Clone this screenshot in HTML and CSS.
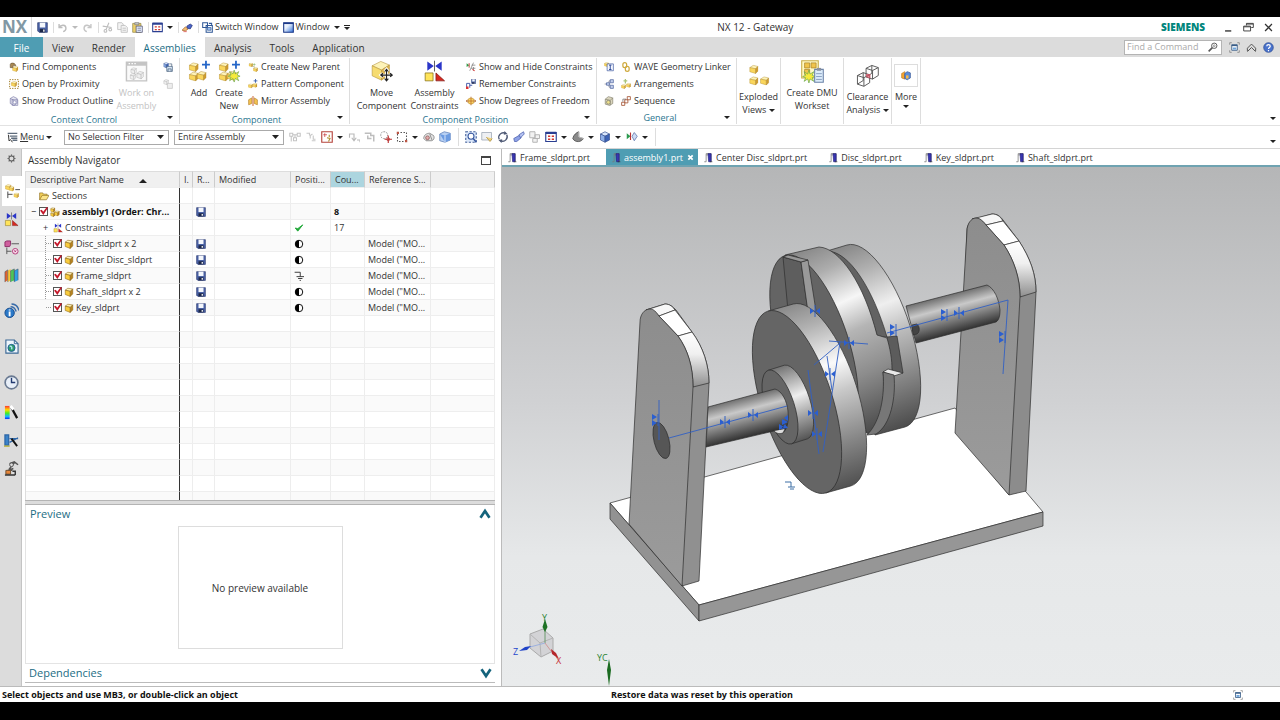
FILE: index.html
```html
<!DOCTYPE html>
<html lang="en">
<head>
<meta charset="utf-8">
<title>NX 12 - Gateway</title>
<link rel="stylesheet" href="styles.css">
</head>
<body>
<svg class="sprite" aria-hidden="true">
  <defs>
    <linearGradient id="blueBox" x1="0" y1="0" x2="1" y2="1"><stop offset="0" stop-color="#fff"/><stop offset=".4" stop-color="#e4eefc"/><stop offset="1" stop-color="#2f6fd8"/></linearGradient>
    <linearGradient id="spectrum" x1="0" y1="0" x2="0" y2="1"><stop offset="0" stop-color="#f33"/><stop offset=".3" stop-color="#fd0"/><stop offset=".55" stop-color="#4e2"/><stop offset=".8" stop-color="#1bf"/><stop offset="1" stop-color="#12f"/></linearGradient>
  </defs>
  <symbol id="cube" viewBox="0 0 16 16"><g stroke="#b08a2c" stroke-width=".7" stroke-linejoin="round"><path d="M1 5l6-4 8 2-4 4z" fill="#fdf2b8"/><path d="M1 5l10 2v8L1 12z" fill="#fad65c"/><path d="M11 7l4-4v8l-4 4z" fill="#cf9c30"/></g></symbol>
  <symbol id="part-cube" viewBox="0 0 16 16"><g stroke="#8a6416" stroke-width=".9" stroke-linejoin="round"><path d="M2 5l4-3 8 1-4 4z" fill="#fdf2b8"/><path d="M2 5l8 2v8l-8-3z" fill="#f9cc3c"/><path d="M10 7l4-4v8l-4 4z" fill="#b9821c"/></g></symbol>
  <symbol id="graycube" viewBox="0 0 16 16"><g stroke="#b4b4b4" fill="#efefef" stroke-linejoin="round"><path d="M2 5l5-4 7 2-4 4z"/><path d="M2 5l8 2v8l-8-3z"/><path d="M10 7l4-4v8l-4 4z"/></g></symbol>
  <symbol id="bluecube" viewBox="0 0 16 16"><g stroke="#35508f" stroke-width=".9" stroke-linejoin="round"><path d="M2 4l6-3 6 3-6 3z" fill="#d8e5fa"/><path d="M2 4l6 3v8l-6-3z" fill="#8fb0e8"/><path d="M8 7l6-3v8l-6 3z" fill="#3c62b5"/></g></symbol>
  <symbol id="save" viewBox="0 0 16 16"><path d="M1 1h14v14H3l-2-2z" fill="#4b63a6" stroke="#26366e"/><path d="M4 1h8v7H4z" fill="#f4f7fc"/><path d="M4 10h8v5H4z" fill="#1c2748"/><path d="M9 11h2v3H9z" fill="#fff"/></symbol>
  <symbol id="undo" viewBox="0 0 16 16"><path d="M3 3v5h5M3 8c3-5 10-4 10 1 0 2-1 4-4 5" fill="none" stroke="#bdbdbd" stroke-width="2"/></symbol>
  <symbol id="redo" viewBox="0 0 16 16"><path d="M13 3v5H8M13 8C10 3 3 4 3 9c0 2 1 4 4 5" fill="none" stroke="#c6c6c6" stroke-width="2"/></symbol>
  <symbol id="cut" viewBox="0 0 16 16"><g fill="none" stroke="#bdbdbd" stroke-width="1.600"><path d="M10 1L6 11M1 6l13 2"/><circle cx="5" cy="13" r="2"/><circle cx="12" cy="11" r="2"/></g></symbol>
  <symbol id="copy" viewBox="0 0 16 16"><g fill="#f4f4f4" stroke="#bdbdbd" stroke-width="1.200"><path d="M1 1h6l2 2v8H1z"/><path d="M6 5h6l3 3v7H6z"/><path d="M8 9h5M8 12h5"/></g></symbol>
  <symbol id="paste" viewBox="0 0 16 16"><path d="M1 2h12v13H1z" fill="#ecd06a" stroke="#8d8146"/><path d="M4 1h6v3H4z" fill="#ccc" stroke="#777"/><path d="M6 6h9v9H6z" fill="#e9f2ff" stroke="#446"/><path d="M8 9h5M8 12h5" stroke="#557"/></symbol>
  <symbol id="layout" viewBox="0 0 16 16"><path d="M1 2h14v12H1z" fill="#fff" stroke="#2a3e91" stroke-width="1.500"/><path d="M1 1h14v3H1z" fill="#2a3e91"/><path d="M4 6h3v2H4zM9 6h3v2H9zM4 10h3v2H4zM9 10h3v2H9z" fill="#d2372f"/></symbol>
  <symbol id="touch" viewBox="0 0 16 16"><path d="M0 12l5-5 4 3-4 3z" fill="#f1bd74" stroke="#a0602a"/><path d="M7 6l5-3 3 2-3 5-4-1z" fill="#4a63c6" stroke="#233278"/><path d="M2 14h5" stroke="#d44"/></symbol>
  <symbol id="switch" viewBox="0 0 16 16"><g fill="#fff" stroke="#2e5797" stroke-width="1.500"><path d="M1 1h7v7H1zM6 5h9v10H6z"/></g><path d="M8 8h5v4H8z" fill="#9dc0ef" stroke="#2e5797"/><path d="M10 2h4v3" fill="none" stroke="#2e5797" stroke-width="1.500"/></symbol>
  <symbol id="win" viewBox="0 0 16 16"><path d="M1 1h14v14H1z" fill="url(#blueBox)" stroke="#1c3988" stroke-width="1.600"/><path d="M1 2h14" stroke="#1c3988" stroke-width="2"/></symbol>
  <symbol id="find" viewBox="0 0 16 16"><use href="#cube" x="5" y="6" width="10" height="10"/><path d="M2 9V4c0-3 7-3 8 0l1 2-4-1-1 4z" fill="#a98954" stroke="#6b583c"/></symbol>
  <symbol id="prox" viewBox="0 0 16 16"><path d="M1 1h14v14H1z" fill="none" stroke="#9b7418" stroke-dasharray="2 2" stroke-width="1.500"/><use href="#cube" x="3" y="3" width="10" height="10"/></symbol>
  <symbol id="outline" viewBox="0 0 16 16"><path d="M2 4l5-3 6 3v8l-5 3-6-3z" fill="#e6e6f0" stroke="#7374a4"/><path d="M5 6h9v9H5zM2 4l6 3" fill="none" stroke="#7374a4"/><circle cx="9" cy="10" r="2.500" fill="#fff" stroke="#7778aa"/></symbol>
  <symbol id="work" viewBox="0 0 32 32"><path d="M2 3h28v26H2z" fill="#fafafa" stroke="#c4c4c4" stroke-width="2"/><path d="M2 3h28v5H2z" fill="#c4c4c4"/><path d="M5 5h2M9 5h2M13 5h2" stroke="#fff" stroke-width="2"/><use href="#graycube" x="7" y="10" width="10" height="10"/><use href="#graycube" x="6" y="18" width="10" height="10"/><use href="#graycube" x="15" y="15" width="12" height="12"/></symbol>
  <symbol id="ctx" viewBox="0 0 16 16"><use href="#bluecube" x="0" y="0" width="10" height="10"/><path d="M6 7h9v8H6z" fill="#d7e5f5" stroke="#33506f"/><path d="M8 15v-4h5v4M10 3h4v4" fill="none" stroke="#33506f"/></symbol>
  <symbol id="ctxg" viewBox="0 0 16 16"><use href="#graycube" x="0" y="0" width="10" height="10"/><path d="M7 7h8v8H7z" fill="#eee" stroke="#bbb"/></symbol>
  <symbol id="add" viewBox="0 0 32 32"><use href="#cube" x="1" y="3" width="14" height="14"/><use href="#cube" x="1" y="16" width="14" height="14"/><use href="#cube" x="12" y="15" width="14" height="14"/><path d="M25 1v11M19.500 6.500h11" stroke="#2566c8" stroke-width="2.500"/></symbol>
  <symbol id="star" viewBox="0 0 16 16"><path d="M8 0l1.500 5L14 2l-2 4.500 4 1.500-4 1.500L14 14l-4.500-3L8 16l-1.500-5L2 14l2-4.500L0 8l4-1.500L2 2l4.500 3z" fill="#f6ea3c" stroke="#5fa251" stroke-width=".8"/></symbol>
  <symbol id="newcomp" viewBox="0 0 32 32"><use href="#add" width="32" height="32"/><use href="#star" x="14" y="14" width="17" height="17"/></symbol>
  <symbol id="parent" viewBox="0 0 16 16"><path d="M2 3h4v4h4v4h4" fill="none" stroke="#a3a37c"/><use href="#cube" x="1" y="1" width="7" height="7"/><use href="#cube" x="8" y="8" width="8" height="8"/><path d="M10 2v4M8 4h4" stroke="#8db96c"/></symbol>
  <symbol id="pattern" viewBox="0 0 16 16"><use href="#cube" x="0" y="7" width="8" height="8"/><use href="#cube" x="7" y="6" width="8" height="8"/><path d="M12 0v6M9 3h6" stroke="#4065b0" stroke-width="1.500"/></symbol>
  <symbol id="mirror" viewBox="0 0 16 16"><path d="M1 6l5-3v9l-5 2zM10 3l5 3v8l-5-2z" fill="#f5c350" stroke="#b17c20"/><path d="M8 0v16" stroke="#c75b2a" stroke-width="1.500"/></symbol>
  <symbol id="move" viewBox="0 0 32 32"><g stroke="#b3913a" stroke-width=".8" stroke-linejoin="round"><path d="M3 8l12-6 12 5-11 7z" fill="#fdf3b8"/><path d="M3 8l13 6v14L3 22z" fill="#f6dc70"/><path d="M16 14l11-7v14l-11 7z" fill="#dcb551"/></g><path d="M23 13v16M15 21h16M20.500 16L23 13l2.500 3M20.500 26l2.500 3 2.500-3M18 18.500L15 21l3 2.500M28 18.500l3 2.500-3 2.500" fill="none" stroke="#fff" stroke-width="4"/><path d="M23 13v16M15 21h16M20.500 16L23 13l2.500 3M20.500 26l2.500 3 2.500-3M18 18.500L15 21l3 2.500M28 18.500l3 2.500-3 2.500" fill="none" stroke="#222" stroke-width="1.600"/></symbol>
  <symbol id="constr" viewBox="0 0 32 32"><path d="M6 2l9 6.500L6 15zM26 2l-9 6.500L26 15z" fill="#2a35c8"/><path d="M16 1v15" stroke="#222"/><path d="M3 18h11v11H3z" fill="#ffe45a" stroke="#806a14"/><path d="M18 18v11h12z" fill="#d6281f" stroke="#7c1712"/></symbol>
  <symbol id="showhide" viewBox="0 0 16 16"><path d="M1 2l4 3-4 3z" fill="#2d9a46"/><path d="M5 2v7" stroke="#b3332b" stroke-width="1.500"/><path d="M12 1L6 14M9 5h6M8 10h7M12 8v6" fill="none" stroke="#7c7c7c" stroke-width="1.200"/><path d="M10 12l4 2" stroke="#d33" stroke-width="1.500"/></symbol>
  <symbol id="remember" viewBox="0 0 16 16"><path d="M1 14V7h5v7M6 10h4" fill="none" stroke="#4057a8" stroke-width="1.500"/><path d="M0 12h4v4H0z" fill="#d33"/><use href="#save" x="8" y="0" width="8" height="8"/></symbol>
  <symbol id="dof" viewBox="0 0 16 16"><circle cx="8" cy="8" r="5" fill="#f9d263" stroke="#c08f2e"/><path d="M0 8h16M8 1v14M3 6L0 8l3 2M13 6l3 2-3 2" fill="none" stroke="#ad5f24"/></symbol>
  <symbol id="gen1" viewBox="0 0 16 16"><use href="#cube" x="0" y="0" width="8" height="8"/><path d="M5 3h10v11H5z" fill="#f5f7ff" stroke="#2e4b96"/><path d="M8 5h4M10 5v7M8 12h4" stroke="#2e4b96" stroke-width="1.500"/></symbol>
  <symbol id="gen2" viewBox="0 0 16 16"><path d="M1 8h7M8 3v10M8 3h3M8 13h3" fill="none" stroke="#667"/><path d="M10 1h5v5h-5zM10 10h5v5h-5zM4 6h5v4H4z" fill="#c3cfec" stroke="#3d5594"/></symbol>
  <symbol id="gen3" viewBox="0 0 16 16"><path d="M2 5l5-4 7 2v9l-5 3-7-2z" fill="#dad5bd" stroke="#7f7c68"/><path d="M2 5l8 2 4-4M10 7v8" fill="none" stroke="#7f7c68"/><circle cx="7" cy="10" r="3" fill="#eddf8c" stroke="#776"/></symbol>
  <symbol id="wave" viewBox="0 0 16 16"><g fill="none" stroke="#cfa93d" stroke-width="2"><rect x="3" y="1" width="6" height="8" rx="3"/><rect x="7" y="7" width="6" height="8" rx="3"/></g></symbol>
  <symbol id="arrange" viewBox="0 0 16 16"><use href="#cube" x="0" y="8" width="8" height="8"/><use href="#cube" x="8" y="6" width="8" height="8"/><path d="M7 0v7M4 3h6" stroke="#a9c477" stroke-width="2"/></symbol>
  <symbol id="seq" viewBox="0 0 16 16"><path d="M10 1h5v5h-5zM6 6h5v5H6zM1 10h5v5H1z" fill="#fff" stroke="#a85a3c" stroke-width="1.400"/><path d="M3 9V5h5" fill="none" stroke="#555"/></symbol>
  <symbol id="explode" viewBox="0 0 32 32"><use href="#cube" x="3" y="1" width="13" height="13"/><use href="#cube" x="3" y="17" width="13" height="13"/><use href="#cube" x="18" y="17" width="13" height="13"/></symbol>
  <symbol id="dmu" viewBox="0 0 32 32"><path d="M1 1h23v24H1z" fill="#fff9c4" stroke="#c7ad48" stroke-width="1.500"/><path d="M5 4h7v7H5zM14 4h7v7h-7zM5 13h7v7H5z" fill="#f0c44c" stroke="#a98229"/><use href="#star" x="2" y="14" width="18" height="18"/><path d="M19 13h12v18H19z" fill="#dcecfb" stroke="#6b83a8" stroke-width="1.500"/><path d="M22 11h6v4h-6z" fill="#8a91a0"/><path d="M21 19h8M21 23h8M21 27h8" stroke="#6b83a8"/></symbol>
  <symbol id="clear" viewBox="0 0 32 32"><g fill="none" stroke="#555" stroke-width="1.300" stroke-linejoin="round"><path d="M14 6l8-4 9 3v11l-8 5-9-3zM14 6l9 3 8-4M23 9v12"/><path d="M2 16l8-4 9 3v11l-8 5-9-3zM2 16l9 3 8-4M11 19v12M22 2v11l-8 5M10 12v11l-8 5"/></g><path d="M14 14h6v6l-6-2z" fill="#e6556b" opacity=".7"/></symbol>
  <symbol id="more" viewBox="0 0 16 16"><path d="M1 4l5-3v12l-5-2z" fill="#f6a52f" stroke="#b97625"/><path d="M6 4l4-3 5 2v8l-5 3-4-2z" fill="#5a8cdb" stroke="#274a8d"/><path d="M8 7h4v5H8z" fill="#f7b748"/></symbol>
  <symbol id="menu" viewBox="0 0 16 16"><path d="M1 2h14M4 6h11M6 9h9M8 12h7" stroke="#5f6c7c" stroke-width="2"/><path d="M2 4l1 9 2-2 3 4" fill="none" stroke="#333" stroke-width="1.400"/></symbol>
  <symbol id="b1" viewBox="0 0 16 16"><path d="M1 3h4v4H1zM6 9h4v4H6zM11 3h4v4h-4zM5 5h6M8 5v4M3 7v7" fill="none" stroke="#c4c4c4" stroke-width="1.400"/></symbol>
  <symbol id="b2" viewBox="0 0 16 16"><path d="M2 3h4v3M7 10V6l3-2M11 6v5h3M9 13h5" fill="none" stroke="#c8c8c8" stroke-width="1.500"/></symbol>
  <symbol id="b3" viewBox="0 0 16 16"><path d="M1 1h14v14H1z" fill="#fff" stroke="#b5443d" stroke-width="1.500"/><path d="M5 3v5M3 5h5" stroke="#c5393c"/><path d="M8 9l4 1-2 4M11 5v3" fill="none" stroke="#b08e30" stroke-width="1.500"/></symbol>
  <symbol id="b4" viewBox="0 0 16 16"><path d="M2 9V4h6v8M5 9l3 4 3-4M12 12h4v3" fill="none" stroke="#b9b9b9" stroke-width="1.500"/></symbol>
  <symbol id="b5" viewBox="0 0 16 16"><path d="M1 3h8v3h4v8M5 6v4h5" fill="none" stroke="#bdbdbd" stroke-width="2"/></symbol>
  <symbol id="b6" viewBox="0 0 16 16"><rect x="1" y="1" width="9" height="9" rx="4" fill="none" stroke="#888" stroke-dasharray="2 1.500" stroke-width="1.300"/><path d="M11 6v10M6 11h10" stroke="#b33" stroke-width="1.500"/><circle cx="11" cy="11" r="2" fill="none" stroke="#b33"/></symbol>
  <symbol id="b7" viewBox="0 0 16 16"><path d="M2 2h12v12H2z" fill="none" stroke="#555" stroke-dasharray="2 2" stroke-width="1.400"/><path d="M1 1h3v3H1zM12 12h3v3h-3z" fill="#b54"/></symbol>
  <symbol id="b8" viewBox="0 0 16 16"><path d="M1 10c0-5 4-7 8-7l5 3c2 3 0 7-3 7H4z" fill="#e4e4e4" stroke="#777"/><circle cx="6" cy="9" r="2.500" fill="#e3aaaa" stroke="#855"/><path d="M9 4l3 8" stroke="#777"/></symbol>
  <symbol id="b9" viewBox="0 0 16 16"><path d="M1 4l6-3 8 2v9l-7 3-7-2z" fill="#b8d0f3" stroke="#5c7fb8"/><path d="M1 4l7 2 7-3v9l-7 3z" fill="#6b9be2"/><path d="M8 6v9" stroke="#fff"/></symbol>
  <symbol id="c1" viewBox="0 0 16 16"><path d="M1 1h14v14H1z" fill="#dce8fa" stroke="#46629c" stroke-dasharray="3 2" stroke-width="1.500"/><circle cx="8" cy="7" r="4" fill="#fff" stroke="#3a5aa1" stroke-width="1.500"/><path d="M11 10l4 5" stroke="#3a5aa1" stroke-width="2"/></symbol>
  <symbol id="c2" viewBox="0 0 16 16"><path d="M1 2h13v10H1z" fill="#eef0f3" stroke="#9aa4b2"/><path d="M7 8l5 6 3-4" fill="#ecd07c" stroke="#b3933d"/></symbol>
  <symbol id="c3" viewBox="0 0 16 16"><path d="M3 11a6 6 0 0 1 8-8M13 5a6 6 0 0 1-8 8" fill="none" stroke="#4c5773" stroke-width="1.800"/><path d="M10 0l4 4-5 1zM6 16l-4-4 5-1z" fill="#4c5773"/></symbol>
  <symbol id="c4" viewBox="0 0 16 16"><path d="M1 10l7-4 3 3-6 5H2z" fill="#8ea2e6" stroke="#4a5eac"/><path d="M8 5l6-4 1 3-5 5z" fill="#b6c3f2" stroke="#4a5eac"/></symbol>
  <symbol id="c5" viewBox="0 0 16 16"><path d="M1 1h7v8H1zM8 5h6v5H8zM5 10h6v5H5z" fill="#f2f2f2" stroke="#b4b4b4" stroke-width="1.300"/></symbol>
  <symbol id="c6" viewBox="0 0 16 16"><path d="M1 10c1-5 5-8 8-9v7l6 2c-2 5-11 6-14 0z" fill="#8a8a8a" stroke="#444"/><path d="M9 1v7l6 2" fill="none" stroke="#ddd"/></symbol>
  <symbol id="c7" viewBox="0 0 16 16"><path d="M1 3l5 4-5 4z" fill="#2b9b4f"/><path d="M6 2v10" stroke="#b33" stroke-width="1.500"/><path d="M11 2l4 5-4 6-3-6z" fill="#cddcf5" stroke="#5a70a5"/></symbol>
  <symbol id="part" viewBox="0 0 16 16"><path d="M2 14h3V3h3M5 3V1h8v13" fill="none" stroke="#777" stroke-width="1.200"/><path d="M8 1h5v13H9z" fill="#3836b0" stroke="#1e1c78"/><path d="M11 14h4" stroke="#333"/></symbol>
  <symbol id="gear" viewBox="0 0 16 16"><circle cx="8" cy="8" r="4.500" fill="none" stroke="#555" stroke-width="1.800"/><path d="M8 1v2M8 13v2M1 8h2M13 8h2M3 3l1.500 1.500M11.500 11.500L13 13M13 3l-1.500 1.500M4.500 11.500L3 13" stroke="#555" stroke-width="2"/></symbol>
  <symbol id="r1" viewBox="0 0 16 16"><use href="#cube" x="0" y="0" width="7" height="7"/><use href="#cube" x="4" y="2" width="6" height="6"/><path d="M3 8v7M3 11h5M11 6h5" stroke="#444" fill="none"/><use href="#cube" x="9" y="9" width="6" height="6"/></symbol>
  <symbol id="r3" viewBox="0 0 16 16"><path d="M1 2l2-1h4v4L6 7H1z" fill="#cf5f9e" stroke="#8e2c67"/><path d="M3 8v7M3 12h5M8 4h8" stroke="#555"/><circle cx="12" cy="12" r="3" fill="#f7dce9" stroke="#b23c7b"/><path d="M11 11l2 2m0-2l-2 2" stroke="#b23c7b"/></symbol>
  <symbol id="r4" viewBox="0 0 16 16"><path d="M1 4l3-2v11l-3 2z" fill="#e2622f"/><path d="M4 3l3-2v12l-3 2z" fill="#f8c636"/><path d="M7 3l4-2v12l-4 2z" fill="#4ec456"/><path d="M11 3l4-2v12l-4 2z" fill="#2f9fe4"/><path d="M1 15V4l3-2v13M7 15V3l4-2v13M11 15V3l4-2v12" fill="none" stroke="#456" stroke-width=".6"/></symbol>
  <symbol id="r5" viewBox="0 0 16 16"><circle cx="6" cy="10.500" r="5" fill="#2b79c8" stroke="#134a8c"/><path d="M6 9v5M6 7v1" stroke="#fff" stroke-width="2"/><path d="M7 4c3 0 5 2 6 5M8 1c4 0 7 3 8 7" fill="none" stroke="#3a6ca9" stroke-width="1.500"/></symbol>
  <symbol id="r6" viewBox="0 0 16 16"><path d="M2 1h9l4 4v10H2z" fill="#eef5fc" stroke="#3b6996" stroke-width="1.200"/><path d="M11 1v4h4" fill="none" stroke="#3b6996"/><circle cx="8" cy="9.500" r="3.800" fill="#2f9d67" stroke="#1e5c96"/><path d="M6 8c2-1 3 1 2 3" fill="none" stroke="#aee3f5" stroke-width="1.500"/></symbol>
  <symbol id="r7" viewBox="0 0 16 16"><circle cx="8" cy="8" r="6.800" fill="#e8eff8" stroke="#6a7a92" stroke-width="1.800"/><path d="M8 3v5h4" fill="none" stroke="#223a70" stroke-width="1.500"/></symbol>
  <symbol id="r8" viewBox="0 0 16 16"><path d="M1 1h5v14H1z" fill="url(#spectrum)"/><path d="M8 3l6 11" stroke="#111" stroke-width="2.400"/><path d="M7 1l3 4" stroke="#fff" stroke-width="3"/></symbol>
  <symbol id="r9" viewBox="0 0 16 16"><path d="M1 13V2h4v11zM6 10l9-5M6 6h9" fill="#3a83c9" stroke="#2d65a6" stroke-width="1.300"/><path d="M8 6l6 8" stroke="#111" stroke-width="2"/><path d="M0 14h6" stroke="#b9b13e" stroke-width="1.500"/></symbol>
  <symbol id="r10" viewBox="0 0 16 16"><path d="M6 3l5-2 4 3M11 2L6 8l3 2M4 10l6-2" fill="none" stroke="#555" stroke-width="1.600"/><circle cx="8" cy="4" r="2" fill="#ddd" stroke="#555"/><path d="M2 10h5v4H2z" fill="#e8863a" stroke="#71502f"/><path d="M1 15h11M9 11h3v4" fill="none" stroke="#333" stroke-width="1.500"/></symbol>
  <symbol id="folder" viewBox="0 0 16 16"><path d="M1 14V3h5l1 2h6v3" fill="#f2cf5a" stroke="#8a6a16"/><path d="M1 14l4-7h11l-4 7z" fill="#fbe48a" stroke="#8a6a16"/></symbol>
  <symbol id="asm" viewBox="0 0 16 16"><use href="#part-cube" x="0" y="0" width="9" height="9"/><use href="#part-cube" x="0" y="7" width="9" height="9"/><use href="#part-cube" x="6" y="5" width="10" height="10"/></symbol>
  <symbol id="tick" viewBox="0 0 16 16"><path d="M2 8l4 5 8-10-8 6z" fill="#20a838" stroke="#20a838" stroke-width="1.500"/></symbol>
  <symbol id="half" viewBox="0 0 16 16"><circle cx="8" cy="8" r="6" fill="#fff" stroke="#000" stroke-width="1.500"/><path d="M8 2a6 6 0 0 0 0 12z"/></symbol>
  <symbol id="ground" viewBox="0 0 16 16"><path d="M1 2h9v7M4 9h12M6.500 12h7M9 15h2" fill="none" stroke="#333" stroke-width="1.500"/></symbol>
  <symbol id="full" viewBox="0 0 16 16"><path d="M4 4h8v8H4z" fill="#fff" stroke="#3a5e88" stroke-width="1.300"/><path d="M4 4h8v2H4z" fill="#3a5e88"/><path d="M5.500 8h5v3h-5z" fill="#6ea5dc"/><path d="M1 4V1h3M12 1h3v3M15 12v3h-3M4 15H1v-3" fill="none" stroke="#777"/></symbol>
  <symbol id="collapse" viewBox="0 0 16 16"><path d="M2 9l6-6 6 6M2 14l6-6 6 6M2 9v4M14 9v4" fill="none" stroke="#444" stroke-width="1.300"/></symbol>
  <symbol id="help" viewBox="0 0 16 16"><circle cx="8" cy="8" r="7" fill="#4a73cc" stroke="#27478e"/><path d="M5.500 6c0-3 5-3 5 0 0 2-2.500 2-2.500 4M8 11.500v2" fill="none" stroke="#fff" stroke-width="1.800"/></symbol>
  <symbol id="search" viewBox="0 0 16 16"><circle cx="10" cy="6" r="4.300" fill="none" stroke="#555" stroke-width="1.500"/><circle cx="10" cy="6" r="1.500" fill="none" stroke="#666"/><path d="M7 9l-6 6" stroke="#555" stroke-width="2.500"/></symbol>
  <symbol id="min" viewBox="0 0 16 16"><path d="M3 13h9" stroke="#333" stroke-width="2"/></symbol>
  <symbol id="restore" viewBox="0 0 16 16"><path d="M5 5V2h10v6h-3M1 6h10v7H1zM1 7h10M5 3h10" fill="none" stroke="#444" stroke-width="1.400"/></symbol>
  <symbol id="close" viewBox="0 0 16 16"><path d="M3 3l10 10M13 3L3 13" stroke="#333" stroke-width="1.800"/></symbol>
  <symbol id="chev" viewBox="0 0 16 16"><path d="M2 13l6-9 6 9" fill="none" stroke="#14637c" stroke-width="3.600"/></symbol>
</svg>

<div class="app">
  <header class="titlebar">
    <span class="nx">NX</span>
    <div class="qat">
      <button class="ib sep" aria-label="Save"><svg><use href="#save"/></svg></button>
      <button class="ib sep" aria-label="Undo"><svg><use href="#undo"/></svg></button><i class="caret dim"></i>
      <button class="ib" aria-label="Redo"><svg><use href="#redo"/></svg></button>
      <button class="ib sep first" aria-label="Cut"><svg><use href="#cut"/></svg></button>
      <button class="ib" aria-label="Copy"><svg><use href="#copy"/></svg></button>
      <button class="ib" aria-label="Paste"><svg><use href="#paste"/></svg></button>
      <button class="ib sep first" aria-label="Repeat command"><svg><use href="#layout"/></svg></button><i class="caret"></i>
      <button class="ib sep" aria-label="Touch mode"><svg><use href="#touch"/></svg></button>
      <button class="ib sep"><svg><use href="#switch"/></svg>Switch Window</button>
      <button class="ib"><svg><use href="#win"/></svg>Window</button><i class="caret"></i>
      <button class="ib over" aria-label="Toolbar options"><i class="caret"></i></button>
    </div>
    <span class="apptitle">NX 12 - Gateway</span>
    <span class="siemens">SIEMENS</span>
    <div class="winctl">
      <button aria-label="Minimize"><svg><use href="#min"/></svg></button>
      <button aria-label="Restore"><svg><use href="#restore"/></svg></button>
      <button aria-label="Close"><svg><use href="#close"/></svg></button>
    </div>
  </header>

  <nav class="tabs">
    <button class="tab file">File</button>
    <button class="tab">View</button>
    <button class="tab">Render</button>
    <button class="tab active">Assemblies</button>
    <button class="tab">Analysis</button>
    <button class="tab">Tools</button>
    <button class="tab">Application</button>
    <label class="search"><input type="text" placeholder="Find a Command" aria-label="Find a Command"><svg><use href="#search"/></svg></label>
    <button class="tico" aria-label="Full screen"><svg><use href="#full"/></svg></button>
    <button class="tico" aria-label="Minimize ribbon"><svg><use href="#collapse"/></svg></button>
    <button class="tico" aria-label="Help"><svg><use href="#help"/></svg></button>
  </nav>

  <section class="ribbon">
    <div class="group g-context">
      <div class="body">
        <div class="stack">
          <button><svg><use href="#find"/></svg>Find Components</button>
          <button><svg><use href="#prox"/></svg>Open by Proximity</button>
          <button><svg><use href="#outline"/></svg>Show Product Outline</button>
        </div>
        <button class="big off"><svg><use href="#work"/></svg><span>Work on<br>Assembly</span></button>
        <div class="stack side">
          <button aria-label="Context"><svg><use href="#ctx"/></svg></button>
          <button aria-label="Display"><svg><use href="#ctxg"/></svg></button>
        </div>
      </div>
      <div class="glabel">Context Control<i class="caret"></i></div>
    </div>
    <div class="group g-component">
      <div class="body">
        <button class="big"><svg><use href="#add"/></svg><span>Add</span></button>
        <button class="big"><svg><use href="#newcomp"/></svg><span>Create<br>New</span></button>
        <div class="stack">
          <button><svg><use href="#parent"/></svg>Create New Parent</button>
          <button><svg><use href="#pattern"/></svg>Pattern Component</button>
          <button><svg><use href="#mirror"/></svg>Mirror Assembly</button>
        </div>
      </div>
      <div class="glabel">Component<i class="caret"></i></div>
    </div>
    <div class="group g-position">
      <div class="body">
        <button class="big"><svg><use href="#move"/></svg><span>Move<br>Component</span></button>
        <button class="big"><svg><use href="#constr"/></svg><span>Assembly<br>Constraints</span></button>
        <div class="stack">
          <button><svg><use href="#showhide"/></svg>Show and Hide Constraints</button>
          <button><svg><use href="#remember"/></svg>Remember Constraints</button>
          <button><svg><use href="#dof"/></svg>Show Degrees of Freedom</button>
        </div>
      </div>
      <div class="glabel">Component Position<i class="caret"></i></div>
    </div>
    <div class="group g-general">
      <div class="body">
        <div class="stack side">
          <button aria-label="Interpart links"><svg><use href="#gen1"/></svg></button>
          <button aria-label="Relations"><svg><use href="#gen2"/></svg></button>
          <button aria-label="Product interface"><svg><use href="#gen3"/></svg></button>
        </div>
        <div class="stack">
          <button><svg><use href="#wave"/></svg>WAVE Geometry Linker</button>
          <button><svg><use href="#arrange"/></svg>Arrangements</button>
          <button><svg><use href="#seq"/></svg>Sequence</button>
        </div>
      </div>
      <div class="glabel">General<i class="caret"></i></div>
    </div>
    <div class="group single g-exploded"><button class="big low"><svg><use href="#explode"/></svg><span>Exploded<br>Views <i class="caret"></i></span></button></div>
    <div class="group single g-dmu"><button class="big"><svg><use href="#dmu"/></svg><span>Create DMU<br>Workset</span></button></div>
    <div class="group single g-clear"><button class="big low"><svg><use href="#clear"/></svg><span>Clearance<br>Analysis <i class="caret"></i></span></button></div>
    <div class="group single g-more"><button class="big low"><span class="frame"><svg><use href="#more"/></svg></span><span>More<br><i class="caret"></i></span></button></div>
    <i class="caret end"></i>
  </section>

  <section class="selbar">
    <button class="ib menu"><svg><use href="#menu"/></svg><span><u>M</u>enu</span><i class="caret"></i></button>
    <select class="filter" aria-label="Selection filter"><option>No Selection Filter</option></select>
    <select class="scope" aria-label="Selection scope"><option>Entire Assembly</option></select>
    <div class="tools">
      <button aria-label="Select parent"><svg><use href="#b1"/></svg></button>
      <button aria-label="Select child"><svg><use href="#b2"/></svg></button>
      <button aria-label="Snap"><svg><use href="#b3"/></svg></button><i class="caret"></i>
      <button aria-label="Up one level"><svg><use href="#b4"/></svg></button>
      <button aria-label="Down one level"><svg><use href="#b5"/></svg></button>
      <button aria-label="Point"><svg><use href="#b6"/></svg></button>
      <button aria-label="Rectangle select"><svg><use href="#b7"/></svg></button><i class="caret"></i>
      <button aria-label="Highlight"><svg><use href="#b8"/></svg></button>
      <button aria-label="See through"><svg><use href="#b9"/></svg></button>
    </div>
    <div class="tools">
      <button aria-label="Fit"><svg><use href="#c1"/></svg></button>
      <button aria-label="Zoom"><svg><use href="#c2"/></svg></button>
      <button aria-label="Rotate"><svg><use href="#c3"/></svg></button>
      <button aria-label="Perspective"><svg><use href="#c4"/></svg></button>
      <button aria-label="Layers"><svg><use href="#c5"/></svg></button>
      <button aria-label="Layout"><svg><use href="#layout"/></svg></button><i class="caret"></i>
      <button aria-label="Clip section"><svg><use href="#c6"/></svg></button><i class="caret"></i>
      <button aria-label="Shading"><svg><use href="#bluecube"/></svg></button><i class="caret"></i>
      <button aria-label="Show and hide"><svg><use href="#c7"/></svg></button><i class="caret"></i>
    </div>
    <i class="caret end"></i>
  </section>

  <main class="main">
    <aside class="rail">
      <button class="gearbtn" aria-label="Resource options"><svg><use href="#gear"/></svg></button>
      <button class="on" aria-label="Assembly Navigator"><svg><use href="#r1"/></svg></button>
      <button aria-label="Constraint Navigator"><svg><use href="#constr"/></svg></button>
      <button aria-label="Part Navigator"><svg><use href="#r3"/></svg></button>
      <button aria-label="Reuse Library"><svg><use href="#r4"/></svg></button>
      <button class="wide" aria-label="HD3D Tools"><svg><use href="#r5"/></svg></button>
      <button class="wide" aria-label="Web Browser"><svg><use href="#r6"/></svg></button>
      <button class="wide" aria-label="History"><svg><use href="#r7"/></svg></button>
      <button aria-label="System Materials"><svg><use href="#r8"/></svg></button>
      <button aria-label="Process Studio"><svg><use href="#r9"/></svg></button>
      <button aria-label="Roles"><svg><use href="#r10"/></svg></button>
    </aside>

    <section class="nav">
      <div class="navhead"><h1>Assembly Navigator</h1><button class="maxi" aria-label="Maximize"></button></div>
      <div class="tree">
        <table>
          <colgroup><col class="k1"><col class="k2"><col class="k3"><col class="k4"><col class="k5"><col class="k6"><col class="k7"><col></colgroup>
          <thead><tr><th>Descriptive Part Name<i class="sort"></i></th><th>I.</th><th>R...</th><th>Modified</th><th>Positi...</th><th class="hot">Cou...</th><th>Reference S...</th><th></th></tr></thead>
          <tbody>
            <tr><td><span class="n l0"><svg><use href="#folder"/></svg>Sections</span></td><td></td><td></td><td></td><td></td><td></td><td></td><td></td></tr>
            <tr class="strong"><td><span class="n root"><i class="tw">−</i><input type="checkbox" checked aria-label="assembly1"><svg><use href="#asm"/></svg>assembly1 (Order: Chr...</span></td><td></td><td><svg><use href="#save"/></svg></td><td></td><td></td><td>8</td><td></td><td></td></tr>
            <tr><td><span class="n l1"><i class="tw">+</i><svg><use href="#constr"/></svg>Constraints</span></td><td></td><td></td><td></td><td><svg><use href="#tick"/></svg></td><td>17</td><td></td><td></td></tr>
            <tr><td><span class="n l2"><input type="checkbox" checked id="p1"><svg><use href="#part-cube"/></svg><label for="p1">Disc_sldprt x 2</label></span></td><td></td><td><svg><use href="#save"/></svg></td><td></td><td><svg><use href="#half"/></svg></td><td></td><td>Model ("MO...</td><td></td></tr>
            <tr><td><span class="n l2"><input type="checkbox" checked id="p2"><svg><use href="#part-cube"/></svg><label for="p2">Center Disc_sldprt</label></span></td><td></td><td><svg><use href="#save"/></svg></td><td></td><td><svg><use href="#half"/></svg></td><td></td><td>Model ("MO...</td><td></td></tr>
            <tr><td><span class="n l2"><input type="checkbox" checked id="p3"><svg><use href="#part-cube"/></svg><label for="p3">Frame_sldprt</label></span></td><td></td><td><svg><use href="#save"/></svg></td><td></td><td><svg><use href="#ground"/></svg></td><td></td><td>Model ("MO...</td><td></td></tr>
            <tr><td><span class="n l2"><input type="checkbox" checked id="p4"><svg><use href="#part-cube"/></svg><label for="p4">Shaft_sldprt x 2</label></span></td><td></td><td><svg><use href="#save"/></svg></td><td></td><td><svg><use href="#half"/></svg></td><td></td><td>Model ("MO...</td><td></td></tr>
            <tr><td><span class="n l2 last"><input type="checkbox" checked id="p5"><svg><use href="#part-cube"/></svg><label for="p5">Key_sldprt</label></span></td><td></td><td><svg><use href="#save"/></svg></td><td></td><td><svg><use href="#half"/></svg></td><td></td><td>Model ("MO...</td><td></td></tr>
            <tr><td></td><td></td><td></td><td></td><td></td><td></td><td></td><td></td></tr>
            <tr><td></td><td></td><td></td><td></td><td></td><td></td><td></td><td></td></tr>
            <tr><td></td><td></td><td></td><td></td><td></td><td></td><td></td><td></td></tr>
            <tr><td></td><td></td><td></td><td></td><td></td><td></td><td></td><td></td></tr>
            <tr><td></td><td></td><td></td><td></td><td></td><td></td><td></td><td></td></tr>
            <tr><td></td><td></td><td></td><td></td><td></td><td></td><td></td><td></td></tr>
            <tr><td></td><td></td><td></td><td></td><td></td><td></td><td></td><td></td></tr>
            <tr><td></td><td></td><td></td><td></td><td></td><td></td><td></td><td></td></tr>
            <tr><td></td><td></td><td></td><td></td><td></td><td></td><td></td><td></td></tr>
            <tr><td></td><td></td><td></td><td></td><td></td><td></td><td></td><td></td></tr>
            <tr><td></td><td></td><td></td><td></td><td></td><td></td><td></td><td></td></tr>
            <tr><td></td><td></td><td></td><td></td><td></td><td></td><td></td><td></td></tr>
          </tbody>
        </table>
      </div>
      <div class="splitter"></div>
      <div class="panel">
        <button class="fold">Preview<svg><use href="#chev"/></svg></button>
        <div class="preview">No preview available</div>
      </div>
      <div class="panel dep">
        <button class="fold down">Dependencies<svg><use href="#chev"/></svg></button>
      </div>
    </section>

    <section class="view">
      <div class="parts">
        <button><svg><use href="#part"/></svg>Frame_sldprt.prt</button>
        <button class="cur"><svg><use href="#part"/></svg>assembly1.prt<svg class="x" viewBox="0 0 16 16"><path d="M3 3l10 10M13 3L3 13" stroke="#fff" stroke-width="4"/></svg></button>
        <button><svg><use href="#part"/></svg>Center Disc_sldprt.prt</button>
        <button><svg><use href="#part"/></svg>Disc_sldprt.prt</button>
        <button><svg><use href="#part"/></svg>Key_sldprt.prt</button>
        <button><svg><use href="#part"/></svg>Shaft_sldprt.prt</button>
      </div>
      <div class="canvas">
        <svg viewBox="502 167 778 519" preserveAspectRatio="xMinYMin meet" role="img" aria-label="Oldham coupling assembly">
          <defs>
            <linearGradient id="rim" gradientUnits="userSpaceOnUse" x1="790" y1="300" x2="860" y2="492"><stop offset="0" stop-color="#848484"/><stop offset=".15" stop-color="#b0b0b0"/><stop offset=".36" stop-color="#fafafa"/><stop offset=".5" stop-color="#c9c9c9"/><stop offset=".75" stop-color="#858585"/><stop offset="1" stop-color="#464646"/></linearGradient>
            <linearGradient id="rim1" gradientUnits="userSpaceOnUse" x1="800" y1="248" x2="885" y2="432"><stop offset="0" stop-color="#858585"/><stop offset=".15" stop-color="#adadad"/><stop offset=".33" stop-color="#f6f6f6"/><stop offset=".48" stop-color="#b5b5b5"/><stop offset=".7" stop-color="#8c8c8c"/><stop offset="1" stop-color="#444"/></linearGradient>
            <linearGradient id="rim2" gradientUnits="userSpaceOnUse" x1="840" y1="245" x2="912" y2="428"><stop offset="0" stop-color="#858585"/><stop offset=".16" stop-color="#b0b0b0"/><stop offset=".36" stop-color="#efefef"/><stop offset=".52" stop-color="#bbb"/><stop offset=".75" stop-color="#858585"/><stop offset="1" stop-color="#484848"/></linearGradient>
            <linearGradient id="hub" gradientUnits="userSpaceOnUse" x1="784" y1="366" x2="812" y2="441"><stop offset="0" stop-color="#777"/><stop offset=".4" stop-color="#eee"/><stop offset=".7" stop-color="#999"/><stop offset="1" stop-color="#484848"/></linearGradient>
            <linearGradient id="shaftL" gradientUnits="userSpaceOnUse" x1="735" y1="399" x2="745" y2="438"><stop offset="0" stop-color="#6c6c6c"/><stop offset=".33" stop-color="#c9c9c9"/><stop offset=".6" stop-color="#8a8a8a"/><stop offset="1" stop-color="#303030"/></linearGradient>
            <linearGradient id="shaftR" gradientUnits="userSpaceOnUse" x1="946" y1="295" x2="956" y2="333"><stop offset="0" stop-color="#6c6c6c"/><stop offset=".33" stop-color="#c9c9c9"/><stop offset=".6" stop-color="#8a8a8a"/><stop offset="1" stop-color="#303030"/></linearGradient>
            <linearGradient id="bend" x1="0" y1="0" x2="0" y2="1"><stop offset="0" stop-color="#fff"/><stop offset=".4" stop-color="#f0f0f0"/><stop offset="1" stop-color="#8e8e8e"/></linearGradient>
            <linearGradient id="face" x1="0" y1="0" x2="0" y2="1"><stop offset="0" stop-color="#8d8d8d"/><stop offset="1" stop-color="#9b9b9b"/></linearGradient>
            <g id="mate"><path d="M0-6V6" stroke="#3160c4"/><path d="M-5-3l4 3-4 3zM5-3L1 0l4 3z" fill="#2b5fd0"/></g>
            <g id="touchmark"><path d="M3-6V6" stroke="#3160c4"/><path d="M-3-6l5 3-5 3zM-3 0l5 3-5 3z" fill="#2b5fd0"/></g>
          </defs>
          <g stroke="#2e2e2e" stroke-width=".7" stroke-linejoin="round">
            <path d="M610 503L955 408l88 104-344 93z" fill="#fff"/>
            <path d="M610 503l89 102v16l-89-102z" fill="#929292"/>
            <path d="M699 605l344-93v14l-344 95z" fill="#969696"/>
            <!-- far bracket -->
            <path d="M967 229c1-6 5-10 11-11l14-4c5 0 8 2 11 6l16 21c11 17 17 33 17 51l-10 199-17 4-50-60z" fill="#8c8c8c"/>
            <path d="M972 219l20-5c5 0 8 2 11 7l-17 4c-4-5-8-8-14-6z" fill="#f7f7f7"/>
            <path d="M986 225l17-4 16 20-15 4z" fill="#fff"/>
            <path d="M1004 245l15-4c11 17 17 33 17 51l-16 5c0-19-6-37-16-52z" fill="url(#bend)"/>
            <path d="M955 433l12-202c0-7 4-13 9-13 4 0 7 3 10 7l18 20c10 15 16 33 16 52l-11 198z" fill="url(#face)"/>
            <path d="M906 306l81-21c7 3 12 14 13 25 0 6-1 10-4 12l-80 21z" fill="url(#shaftR)"/>
            <path d="M912 325l5-1c3 3 3 8 0 10l-4 1z" fill="#444"/>
            <!-- rear half of the centre disc -->
            <path d="M827 251L847 245A35.500 95.400 -17.800 0 1 905 427L875 435z" fill="url(#rim2)"/>
            <path d="M827 251c22 0 46 38 60 86l-10-1c-12-42-30-75-50-85z" fill="#626262"/>
            <path d="M887 337l10-1 6 37-11-2z" fill="#5c5c5c"/>
            <path d="M785 255L819 247C840 248 864 284 877 335L887 338C892 355 892 365 892 371L883 372C886 396 882 420 868 434L840 400z" fill="url(#rim1)"/>
            <path d="M883 372l5-3 15 4-9 3z" fill="#e9e9e9"/>
            <path d="M883 372l11 3c2 22-3 50-18 59l-9 1c13-13 18-37 16-63z" fill="#777"/>
            <ellipse cx="814" cy="346" rx="35" ry="95" transform="rotate(-17.8 814 346)" fill="#646464"/>
            <path d="M783 257l18 5 7 49h-20z" fill="#5e5e5e"/>
            <path d="M801 262l7-2 8 51-8 1z" fill="#999"/>
            <path d="M783 257l5-2 20 5-7 2z" fill="#979797"/>
            <!-- front disc -->
            <path d="M768.300 311L793.300 304A35.500 95.400 -17.800 0 1 850.700 486L825.700 493z" fill="url(#rim)"/>
            <ellipse cx="797" cy="402" rx="35.500" ry="95.400" transform="rotate(-17.8 797 402)" fill="#656565"/>
            <path d="M768.400 370.200L784.400 365.200A14.400 38.600 -17.600 0 1 807.600 438.800L791.600 443.800z" fill="url(#hub)"/>
            <ellipse cx="780" cy="407" rx="14.400" ry="38.600" transform="rotate(-17.6 780 407)" fill="#656565"/>
            <path d="M708 407l67-18c7 2 12 12 13 22 1 11-1 20-6 22l-8-2-68 16z" fill="url(#shaftL)"/>
            <path d="M774 431c3 3 6 3 9 2l2-4" fill="#ddd"/>
            <!-- near bracket -->
            <path d="M646 310l19-6c5 0 8 3 11 6l16 22c11 15 17 33 17 51l-10 198-17 5z" fill="#909090"/>
            <path d="M646 310l19-6c5 0 8 3 10 6l-16 6c-4-5-7-7-13-6z" fill="#f7f7f7"/>
            <path d="M659 316l16-6 17 22-14 4z" fill="#fff"/>
            <path d="M678 336l14-4c11 15 17 33 17 51l-16 4c0-20-5-37-15-51z" fill="url(#bend)"/>
            <path d="M629 524l11-202c0-7 4-13 10-13 4 0 6 3 9 7l19 20c10 14 15 31 15 51l-11 199z" fill="url(#face)"/>
            <ellipse cx="661.500" cy="440.500" rx="7.500" ry="18.500" transform="rotate(-14 661.500 440.500)" fill="#565656"/>
          </g>
          <g fill="none" stroke="#3160c4" stroke-width=".9">
            <path d="M669 438l118-32M659 400v40M887 333l121-33-5 74M829 341l39 3M840 342l-17 110M840 343l-26 22M827 356l5 34M808 370l11 84"/>
          </g>
          <use href="#mate" x="725" y="422"/><use href="#mate" x="753" y="415"/><use href="#mate" x="815" y="311"/><use href="#mate" x="849" y="343"/><use href="#mate" x="830" y="374"/><use href="#mate" x="813" y="413"/><use href="#mate" x="817" y="434"/><use href="#mate" x="959" y="313"/>
          <use href="#touchmark" x="655" y="420"/><use href="#touchmark" x="893" y="330"/><use href="#touchmark" x="944" y="315"/><use href="#touchmark" x="1002" y="337"/>
          <path d="M779 424l5 3-5 3zM782 419l6 3-6 3zM788 415l-4 3 4 3zM785 424l-4 5 7-1z" fill="#2b5fd0"/>
          <path d="M785 482h6v5M788 487h7M790 489h4" fill="none" stroke="#3d6fa5"/>
          <!-- view triad -->
          <g>
            <path d="M530 634l13-5 10 9v13l-12 6-11-9z" fill="#d3d3d6" stroke="#aaa"/>
            <path d="M530 634l10 9 13-5M540 643l1 14" fill="none" stroke="#b4b4b4"/>
            <path d="M545 643v-13" stroke="#6d9a6f"/><path d="M545 619l2.500 8-2.500 5-2.500-5z" fill="#1f7225"/>
            <path d="M545 643l-15 4" stroke="#9db1de"/><path d="M519 651l6-4 6-1-4 4z" fill="#2044c8"/>
            <path d="M545 643l6 8" stroke="#d09a9a"/><path d="M559 659l-7-5-1-5 5 4z" fill="#b5272b"/>
            <path d="M609 686l-2-16 2-11 2 11z" fill="#1b6b21"/>
            <g class="axis"><text x="542" y="621" fill="#2c8434">Y</text><text x="513" y="655" fill="#2547cc">Z</text><text x="556" y="664" fill="#c62f33">X</text><text x="597" y="661" fill="#2c8434">YC</text></g>
          </g>
        </svg>
      </div>
    </section>
  </main>

  <footer class="status"><span>Select objects and use MB3, or double-click an object</span><span>Restore data was reset by this operation</span><button aria-label="Full screen"><svg><use href="#full"/></svg></button></footer>
</div>
</body>
</html>
```
FILE: styles.css
```css
* { box-sizing: border-box; }
body {
  margin: 0;
  height: 100vh;
  padding: 17px 0 18px;
  background: #000;
  color: #333;
  font: 9px/12px "Open Sans", "Noto Sans", sans-serif;
}
button { margin: 0; padding: 0; border: 0; background: none; color: inherit; font: inherit; white-space: nowrap; }
svg { display: block; flex: none; width: 12px; height: 12px; }
.sprite { position: absolute; width: 0; height: 0; }
.app { display: flex; flex-direction: column; height: 100%; background: #fff; }
.caret { display: inline-block; flex: none; width: 0; height: 0; border: 3px solid transparent; border-top-color: #222; border-bottom: 0; }
.caret.dim { border-top-color: #bbb; }

.titlebar { display: flex; align-items: center; height: 20px; }
.nx { width: 32px; padding-left: 2px; color: #8298a4; font: bold 17px/20px "Open Sans", sans-serif; border-right: 1px solid #ddd; }
.qat { display: flex; align-items: center; gap: 4px; padding-left: 5px; }
.ib { display: flex; align-items: center; gap: 2px; }
.qat svg { width: 11px; height: 11px; }
.qat .sep + .sep, .qat .caret + .sep, .qat .first { margin-left: 1px; padding-left: 3px; border-left: 1px solid #ddd; }
.over { padding-top: 2px; }
.over .caret { position: relative; }
.over .caret::before { content: ""; position: absolute; left: -3px; top: -5px; width: 6px; height: 1px; background: #222; }
.apptitle { flex: 1; text-align: center; font-size: 10px; }
.siemens { color: #00857c; font-size: 10px; font-weight: 800; }
.winctl { display: flex; gap: 9px; padding: 0 6px 0 18px; }
.winctl svg { width: 11px; height: 11px; }

.tabs { display: flex; align-items: center; height: 20px; background: #dcdcdc; font-size: 10px; }
.tab { height: 20px; padding: 1px 9px 0; }
.file { min-width: 43px; background: #4f9db3; color: #fff; }
.tab.active { background: #fff; color: #1b6c84; }
.search { display: flex; align-items: center; width: 98px; height: 15px; margin-left: auto; margin-right: 7px; padding-right: 3px; background: #fff; border: 1px solid #b4b4b4; }
.search input { flex: 1; min-width: 0; border: 0; padding: 0 2px; background: none; font: inherit; font-size: 9px; outline: none; }
.search input::placeholder { color: #aaa; opacity: 1; }
.search svg { width: 10px; height: 10px; }
.tico { margin-right: 6px; }
.tico svg { width: 11px; height: 11px; }

.ribbon { display: flex; height: 69px; padding-top: 1px; border-bottom: 1px solid #e2e2e2; }
.group { position: relative; display: flex; flex-direction: column; margin-bottom: 1px; border-right: 1px solid #ddd; }
.g-context { width: 180px; padding-left: 9px; }
.g-component { width: 170px; padding-left: 4px; }
.g-position { width: 247px; padding-left: 5px; }
.g-general { width: 140px; padding-left: 7px; }
.g-exploded { width: 44px; }
.g-dmu { width: 63px; }
.g-clear { width: 48px; }
.g-more { width: 29px; }
.body { display: flex; flex: 1; }
.stack { display: flex; flex-direction: column; }
.stack button { display: flex; align-items: center; gap: 3px; height: 17px; text-align: left; }
.stack svg { width: 10px; height: 10px; }
.g-context .side { margin-left: 4px; }
.g-general .side { width: 17px; }
.big { display: flex; flex-direction: column; align-items: center; gap: 3px; min-width: 30px; padding-top: 2px; line-height: 13px; }
.big svg { width: 23px; height: 23px; }
.g-context .big { width: 46px; }
.g-component .stack { margin-left: 4px; }
.g-position .big { width: 53px; }
.g-position .stack { margin-left: 5px; }
.big.off { color: #c3c3c3; }
.single .big { align-self: stretch; min-width: 0; }
.big.low { padding-top: 6px; }
.frame { display: flex; align-items: center; justify-content: center; width: 24px; height: 23px; border: 1px solid #ddd; }
.frame svg { width: 10px; height: 10px; }
.big .caret { vertical-align: middle; }
.g-more .caret { vertical-align: top; margin-top: 2px; }
.glabel { display: flex; align-items: center; justify-content: center; height: 14px; padding: 2px 20px 0 0; color: #2b7590; }
.glabel .caret { position: absolute; right: 6px; bottom: 5px; }
.end { align-self: flex-end; margin: 0 4px 5px auto; }

.selbar { display: flex; align-items: center; height: 23px; padding-left: 7px; border-bottom: 1px solid #d4d4d4; }
.menu { width: 57px; }
.menu svg { width: 11px; height: 11px; }
.selbar select { appearance: none; height: 15px; margin-right: 5px; padding: 0 3px; border: 1px solid #aaa; border-radius: 0; color: #333; font: inherit; background: #fff url("data:image/svg+xml,%3Csvg xmlns='http://www.w3.org/2000/svg' width='8' height='5'%3E%3Cpath d='M0 0h7L3.5 4z' fill='%23222'/%3E%3C/svg%3E") no-repeat right 3px center; }
.filter { width: 105px; }
.scope { width: 110px; }
.tools { display: flex; align-items: center; gap: 4px; height: 18px; padding-right: 7px; border-right: 1px solid #ddd; }
.tools + .tools { padding-left: 6px; }
.tools svg { width: 12px; height: 12px; }
.tools .caret:not(:last-child) { margin-right: 1px; }

.main { display: flex; flex: 1; min-height: 0; }
.rail { display: flex; flex-direction: column; align-items: center; width: 22px; padding: 0 0 0 2px; background: #dcdcdc; border-right: 1px solid #c4c4c4; }
.rail button { display: flex; align-items: center; justify-content: center; width: 20px; height: 28px; }
.rail .gearbtn { height: 18px; margin-bottom: 9px; }
.rail svg { width: 15px; height: 15px; }
.rail .gearbtn svg { width: 9px; height: 9px; }
.rail .on { height: 30px; margin-right: -1px; background: #fff; }
.rail .on + button { height: 27px; }
.rail .wide { height: 36px; }
.rail .wide:nth-child(6) { margin-top: 3px; }
.rail .wide + button:not(.wide) { height: 24px; margin-bottom: 2px; }

.nav { display: flex; flex-direction: column; width: 480px; padding: 0 6px 3px 3px; border-right: 1px solid #bbb; }
.navhead { display: flex; align-items: center; justify-content: space-between; height: 22px; padding: 0 4px 0 3px; }
.navhead h1 { margin: 0; font-size: 10px; font-weight: 400; }
.maxi { width: 10px; height: 9px; border: 1px solid #444; border-top-width: 2px; }
.tree { flex: 1; min-height: 0; overflow: hidden; border-left: 1px solid #ddd; }
table { width: 100%; border-collapse: separate; border-spacing: 0; table-layout: fixed; }
.k1 { width: 154px; } .k2 { width: 13px; } .k3 { width: 22px; } .k4 { width: 76px; } .k5 { width: 40px; } .k6 { width: 34px; } .k7 { width: 66px; }
th, td { height: 16px; padding: 0 0 0 3px; line-height: 15px; text-align: left; font-weight: 400; white-space: nowrap; overflow: hidden; border-right: 1px solid #ededed; border-bottom: 1px solid #eee; }
th { height: 17px; background: #f0f0f0; border-right-color: #ccc; border-top: 1px solid #ddd; padding-left: 4px; }
th.hot { background: #acd5df; }
td:first-child { padding: 0; border-right-color: #333; }
tbody tr:nth-child(even) { background: #fafafa; }
td svg { width: 10px; height: 10px; }
.strong td { font-weight: 700; color: #111; }
.sort { display: inline-block; margin-left: 15px; vertical-align: middle; border: 4px solid transparent; border-top: 0; border-bottom-color: #222; }
.n { display: flex; align-items: center; gap: 3px; height: 15px; }
.n input { appearance: none; position: relative; flex: none; width: 9px; height: 9px; margin: 0; border: 1px solid #555; background: #fff; }
.n input::after { content: ""; position: absolute; left: 0; top: -1px; width: 8px; height: 8px; background: #c4182b; clip-path: polygon(0 45%, 22% 35%, 40% 60%, 85% 0, 100% 10%, 42% 100%); }
.l0 { padding-left: 13px; }
.root { padding-left: 4px; gap: 2px; }
.l1 { padding-left: 16px; gap: 2px; }
.l2 { margin-left: 19px; gap: 2px; border-left: 1px dotted #999; }
.l2::before { content: ""; width: 5px; border-top: 1px dotted #999; }
.l2.last { border-left-color: transparent; }
.tw { width: 7px; font-style: normal; font-weight: 400; text-align: center; }
.l1 .tw { margin-right: 2px; }

.splitter { height: 5px; background: #dcdcdc; border: 1px solid #b4b4b4; border-width: 1px 0; }
.panel { border: 1px solid #e4e4e4; border-top: 0; padding-bottom: 14px; }
.dep { padding: 0; border-width: 0 0 1px; border-color: #bbb; }
.fold { display: flex; align-items: center; justify-content: space-between; width: 100%; height: 18px; padding: 0 3px 0 4px; color: #1b6c84; font-size: 11px; }
.down svg { transform: scaleY(-1); }
.preview { display: flex; align-items: center; justify-content: center; width: 165px; height: 123px; margin: 3px auto 0; border: 1px solid #ddd; font-size: 10px; }

.view { display: flex; flex: 1; flex-direction: column; min-width: 0; }
.parts { display: flex; height: 18px; border-bottom: 2px solid #6fa3b1; }
.parts button { display: flex; align-items: center; gap: 3px; padding: 1px 16px 0 5px; }
.parts svg { width: 10px; height: 10px; }
.parts .cur { background: #4f9db3; color: #fff; padding-right: 4px; }
.parts .x { width: 7px; height: 7px; margin-left: 1px; }
.canvas { flex: 1; min-height: 0; background: linear-gradient(#b5b6b7, #d0d1d3 45%, #e6e8e9 75%, #e9ebec); }
.canvas svg { width: 100%; height: 100%; }
.axis { font: 9px "Open Sans", sans-serif; }

.status { display: grid; grid-template-columns: 609fr 622fr 47px; align-items: center; height: 16px; padding-left: 2px; border-top: 1px solid #bbb; color: #111; font-weight: 700; }
.status svg { width: 10px; height: 10px; }
```
